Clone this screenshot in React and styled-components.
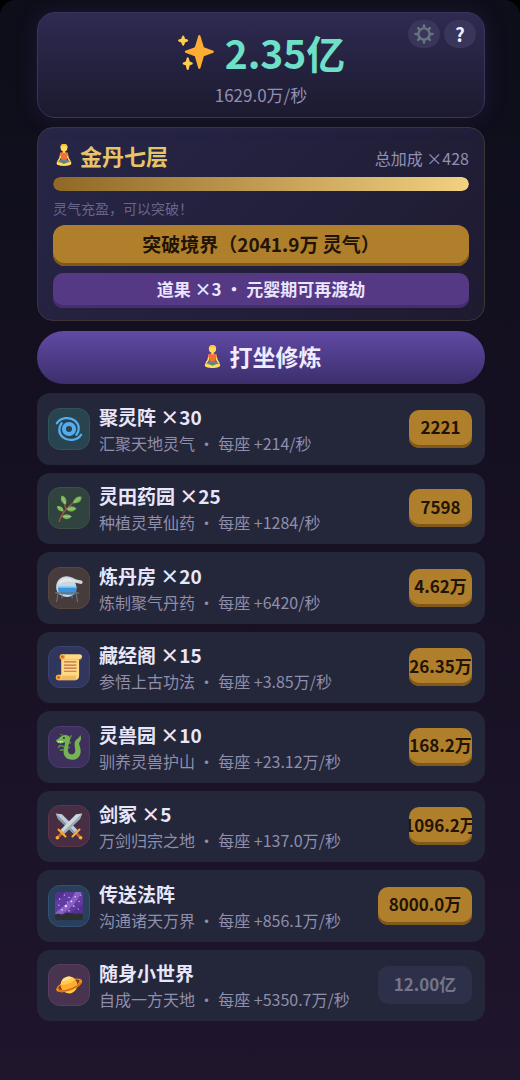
import React from 'react';
import styled, { createGlobalStyle } from 'styled-components';

const GlobalStyle = createGlobalStyle`
   * {
      box-sizing: border-box;
   }
   body {
      margin: 0;
      background: #000;
      font-family: 'Noto Sans CJK SC', sans-serif;
      color: #e8e6ff;
   }
   button {
      font-family: inherit;
      border: none;
      margin: 0;
      padding: 0;
      cursor: pointer;
   }
   h2, h3, p {
      margin: 0;
   }
   svg {
      display: block;
      flex-shrink: 0;
   }
`;

const Page = styled.main`
   display: flex;
   flex-direction: column;
   min-height: 100vh;
   padding: 12px 35px 59px 37px;
   border-radius: 16px 16px 0 0;
   background: linear-gradient(180deg, #0d0e19 0%, #151021 40%, #1f152c 100%);
`;

const Header = styled.header`
   position: relative;
   display: flex;
   flex-direction: column;
   align-items: center;
   height: 106px;
   padding-top: 14px;
   border: 1px solid #3a355c;
   border-radius: 18px;
   background: linear-gradient(180deg, #2e2a51 0%, #1c1a2f 100%);
   box-shadow: 0 0 24px rgba(100, 80, 200, 0.15);
`;

const Total = styled.div`
   display: flex;
   align-items: center;
   gap: 10px;
   height: 50px;
   font-size: 39px;
   line-height: 50px;
   font-weight: 700;
   color: #6ee0c8;
`;

const Rate = styled.p`
   margin-top: 6px;
   font-size: 17px;
   line-height: 24px;
   color: #9290b2;
`;

const Tools = styled.div`
   position: absolute;
   top: 7px;
   right: 8px;
   display: flex;
   gap: 4px;
`;

const ToolButton = styled.button`
   display: flex;
   align-items: center;
   justify-content: center;
   width: 32px;
   height: 28px;
   border-radius: 14px;
   background: #3a355a;
   color: #f0eeff;
   font-size: 19px;
   line-height: 28px;
   font-weight: 700;
`;

const Realm = styled.section`
   display: flex;
   flex-direction: column;
   margin-top: 9px;
   padding: 13px 15px 12px;
   border: 1px solid #3d3438;
   border-radius: 16px;
   background: linear-gradient(135deg, #272647 0%, #1e1a30 100%);
`;

const RealmTop = styled.div`
   display: flex;
   align-items: center;
   justify-content: space-between;
   height: 28px;
`;

const RealmName = styled.h2`
   display: flex;
   align-items: center;
   gap: 5px;
   font-size: 22px;
   line-height: 28px;
   font-weight: 700;
   color: #e8c468;
`;

const Bonus = styled.span`
   padding-top: 5px;
   font-size: 16px;
   line-height: 24px;
   color: #9290b2;
`;

const Track = styled.div`
   height: 14px;
   margin-top: 8px;
   border-radius: 7px;
   background: #15132a;
   overflow: hidden;
`;

const Fill = styled.div`
   height: 100%;
   border-radius: 7px;
   background: linear-gradient(90deg, #8f6825 0%, #f2d180 100%);
`;

const Hint = styled.p`
   margin-top: 7px;
   font-size: 14px;
   line-height: 20px;
   color: #67668a;
`;

const WideButton = styled.button`
   display: flex;
   align-items: center;
   justify-content: center;
   width: 100%;
   height: ${props => props.$kind === 'gold' ? '41px' : '35px'};
   margin-top: 7px;
   padding-bottom: 3px;
   border-radius: ${props => props.$kind === 'gold' ? '12px' : '10px'};
   background: ${props => props.$kind === 'gold' ? '#b07f2c' : '#553985'};
   box-shadow: inset 0 -3px 0 ${props => props.$kind === 'gold' ? '#80591a' : '#452d70'};
   color: ${props => props.$kind === 'gold' ? '#221404' : '#eae4ff'};
   font-size: ${props => props.$kind === 'gold' ? '19px' : '17px'};
   line-height: 28px;
   font-weight: 700;
`;

const Meditate = styled.button`
   display: flex;
   align-items: center;
   justify-content: center;
   gap: 6px;
   height: 53px;
   margin-top: 10px;
   padding-bottom: 3px;
   border-radius: 27px;
   background: linear-gradient(180deg, #614aa5 0%, #3c2e6c 100%);
   color: #f0ecff;
   font-size: 23px;
   line-height: 32px;
   font-weight: 700;
`;

const List = styled.ul`
   display: grid;
   grid-auto-rows: 1fr;
   flex: 1;
   gap: 8px;
   margin: 9px 0 0;
   padding: 0;
   list-style: none;
`;

const Row = styled.li`
   display: flex;
   align-items: center;
   gap: 9px;
   padding: 0 13px 0 11px;
   border-radius: 13px;
   background: #24263a;
`;

const IconBox = styled.div`
   display: flex;
   align-items: center;
   justify-content: center;
   flex-shrink: 0;
   width: 42px;
   height: 42px;
   border: 1px solid ${props => props.$line};
   border-radius: 12px;
   background: ${props => props.$tint};
`;

const Info = styled.div`
   flex: 1;
   min-width: 0;
   white-space: nowrap;
`;

const Name = styled.h3`
   font-size: 19px;
   line-height: 28px;
   font-weight: 700;
   color: #e8e6fa;
`;

const Detail = styled.p`
   font-size: 16px;
   line-height: 24px;
   color: #8f8eab;
`;

const Price = styled.button`
   display: flex;
   align-items: center;
   justify-content: center;
   flex-shrink: 0;
   width: ${props => props.$wide ? '94px' : '63px'};
   height: 38px;
   padding-bottom: 3px;
   border-radius: 10px;
   overflow: hidden;
   white-space: nowrap;
   background: #b07f2c;
   box-shadow: inset 0 -3px 0 #80591a;
   color: #221404;
   font-size: 17px;
   line-height: 24px;
   font-weight: 700;

   &:disabled {
      background: #2d3049;
      box-shadow: none;
      color: #74758a;
   }
`;

const Sparkles = () => (
   <svg width="38" height="38" viewBox="0 0 36 36" aria-hidden="true">
      <path fill="#FFAC33" d="M34.347 16.893l-8.899-3.294-3.323-10.891c-.128-.42-.517-.708-.956-.708-.439 0-.828.288-.956.708l-3.322 10.891-8.9 3.294c-.393.146-.653.519-.653.938 0 .418.26.793.653.938l8.895 3.293 3.324 11.223c.126.424.516.715.959.715.442 0 .833-.291.959-.716l3.324-11.223 8.896-3.293c.391-.144.652-.518.652-.937 0-.418-.261-.792-.653-.938z"/>
      <path fill="#FFCC4D" d="M14.347 27.894l-2.314-.856-.9-3.3c-.118-.436-.513-.738-.964-.738-.451 0-.846.302-.965.737l-.9 3.3-2.313.856c-.393.146-.653.52-.653.938 0 .418.26.793.653.938l2.301.853.907 3.622c.112.444.511.756.97.756.459 0 .858-.312.97-.757l.907-3.622 2.301-.853c.393-.144.653-.519.653-.937 0-.418-.26-.793-.653-.937zM10.009 6.231l-2.364-.875-.876-2.365c-.145-.393-.519-.653-.938-.653-.418 0-.792.26-.938.653l-.875 2.365-2.365.875c-.393.146-.653.52-.653.938 0 .418.26.793.653.938l2.365.875.875 2.365c.146.393.52.653.938.653.418 0 .792-.26.938-.653l.875-2.365 2.365-.875c.393-.146.653-.52.653-.938 0-.418-.26-.792-.653-.938z"/>
   </svg>
);

const Gear = () => (
   <svg width="20" height="20" viewBox="0 0 20 20" fill="none" stroke="#66757F" aria-hidden="true">
      <circle cx="10" cy="10" r="5.600" strokeWidth="2.400"/>
      <path strokeWidth="2.600" strokeLinecap="round" d="M10 3.400V1.600M10 16.600v1.800M3.400 10H1.600M16.600 10h1.800M5.300 5.300L4.200 4.200M14.700 5.300l1.100-1.100M5.300 14.700l-1.100 1.100M14.700 14.700l1.100 1.100"/>
   </svg>
);

const Lotus = ({ size }) => (
   <svg width={size} height={size} viewBox="0 0 36 36" aria-hidden="true">
      <path fill="none" stroke="#FFDC5D" strokeWidth="2.600" strokeLinecap="round" strokeLinejoin="round" d="M13 15.500l-1.600 7.500-3.400 6M23 15.500l1.600 7.500 3.400 6"/>
      <path fill="#F4703A" d="M14 13.500h8c2 .4 2.800 2 3 4.500l-1.800 1.500-.7 7h-9l-.7-7L11 18c.2-2.500 1-4.100 3-4.500z"/>
      <path fill="#FFDC5D" d="M16.200 10.500h3.600v3.600c-.8 1.200-2.800 1.200-3.600 0z"/>
      <path fill="#6D7F96" d="M13.500 25.500h9c2.500 1 4.500 2.600 5.500 4.500l-5 3H13l-5-3c1-1.900 3-3.500 5.500-4.500z"/>
      <path fill="#FFDC5D" d="M6.500 30c1.800-1.300 4.300-.2 6.500.7l5 1.500 5-1.500c2.200-.9 4.700-2 6.500-.7 1.500 1.600.3 3.500-1.500 4.300-3 1.200-6.500 1.700-10 1.700s-7-.5-10-1.700C6.200 33.500 5 31.600 6.500 30z"/>
      <path fill="#5C913B" d="M14 30.500l4 1.700 4-1.700-4-2z"/>
      <ellipse cx="18" cy="6.200" rx="5.600" ry="6" fill="#FFDC5D"/>
      <path fill="#FFC233" d="M12.300 6.500C11.800 1.500 14.500 0 18 0s6.200 1.500 5.700 6.500c-.7-2.200-1.700-3-3.200-3.300-1.800.6-3.500.4-5 .3-1.600.3-2.500 1.200-3.200 3z"/>
   </svg>
);

const Cyclone = () => (
   <g fill="none" stroke="#55ACEE" strokeLinecap="round">
      <circle cx="18" cy="18" r="6.500" strokeWidth="5.200"/>
      <path strokeWidth="3" d="M2.500 10.500C7 3.500 19 1.500 26 7.500c5.500 5 6 12.500 1.500 18"/>
      <path strokeWidth="3" d="M33.500 25.500C29 32.500 17 34.500 10 28.500 4.500 23.500 4 16 8.500 10.500"/>
   </g>
);

const Herb = () => (
   <>
      <path fill="none" stroke="#A0563F" strokeWidth="1.800" strokeLinecap="round" d="M5.500 35.500C7 27 13 20 24 11M14 19.500L12 11M10.500 23.500L7 20M14 19.500l5-.5M8.500 29l5 .5"/>
      <g fill="#77B255">
         <path d="M8.500 2c5 1 7.500 5.500 5.500 11.500C8.500 12 6 7.500 8.500 2z"/>
         <path d="M34 3.500c.5 6-4.500 9.500-11 8C24 6 28.500 2.500 34 3.500z"/>
         <path d="M2.500 15.500c4.500-1 8.500 1.500 8.500 6.500-5 1-8.500-1.500-8.500-6.500z"/>
         <path d="M15 19.500c2-4.500 8.500-5 12.500-1-3.500 5-9.500 5.500-12.500 1z"/>
         <path d="M9.500 29c2-4 8-4 12 0-4 4.500-9.500 4.500-12 0z"/>
      </g>
      <path fill="none" stroke="#A6D388" strokeWidth="1.200" strokeLinecap="round" d="M13 12L10 5M25 10.500l6.500-5M9.500 20.500l-5-3.500M17 19.500l8-.5M11.500 29h8"/>
   </>
);

const Alembic = () => (
   <>
      <path fill="#CCD6DD" d="M1.500 17C1.500 8.500 7.500 3 15.500 3c5 0 8 3 12 4.200l6.500 1.300c2.200.6 2 4.300-.5 4.300L26 11.300c3.500 7.200 1 17.700-9.500 18.200C7.500 29.500 1.500 24 1.500 17z"/>
      <path fill="#E1E8ED" d="M4 14C6 8 11 4.500 16.500 5c4.500.8 8 3.500 16 4.800-7 .7-13-.8-19 .2-4 .6-7 1.800-9.500 4z"/>
      <path fill="#3B94D9" d="M4 16.500h23.500v6c-2 3-5.500 4.500-11 4.500S5.500 25 4 22z"/>
      <path fill="#8CCAF7" d="M4 15.500h23.500v2.200H4z"/>
      <path fill="none" stroke="#66757F" strokeWidth="2" strokeLinecap="round" d="M1 24.500h29"/>
      <path fill="none" stroke="#66757F" strokeWidth="1.400" strokeLinecap="round" d="M4 25L2 35.500M27 25l2 10.500M9 25v6M22 25v6"/>
   </>
);

const Scroll = () => (
   <>
      <path fill="#FFD983" d="M9 1.500h22.500c4.500 0 4.500 6-.5 6.500v21c0 4-2 6-5 6H4.500c-4.500 0-4.500-7 0-7H8V8C5 6 6 2 9 1.500z"/>
      <path fill="#E39F3D" d="M12 8h20c3 0 4-3 3-4 1 6-3 6-7 5H12zM27 35H5c4 0 5-4 3-6h19z" opacity=".5"/>
      <circle cx="9.500" cy="5" r="3.500" fill="#FFAC33"/>
      <circle cx="9.500" cy="5" r="1.800" fill="#C1694F"/>
      <circle cx="4.500" cy="31.500" r="3.500" fill="#FFAC33"/>
      <circle cx="4.500" cy="31.500" r="1.800" fill="#C1694F"/>
      <path stroke="#C1694F" strokeWidth="1.500" strokeLinecap="round" d="M12 11.500h15M12 15.500h15M12 19.500h15M12 23.500h15"/>
   </>
);

const Dragon = () => (
   <>
      <path fill="#77B255" d="M1 9.500c2.500-1 4.500-3.500 7.500-5.500C12 1.500 19 2 19.500 7.500c.3 4-3 8-3 13 0 4.500 1.500 7 4.800 7 3.700 0 5.200-3 4.700-7C25.500 17 24 12.500 27 9c2-2.300 4.300-3 5.500-6.500C34.500 7 33 10 31.500 12c-1.500 2.500 1.500 6 1.500 11 0 7-4.500 11.500-11 11.500-7.500 0-11.500-5-11-12.500.3-4.500 2-7 2-10-3.500 1.800-6.500 2-9.500.5z"/>
      <path fill="#5C913B" d="M9 3.500L5.500 1l6.500 1.500zM18.500 4L22 2.500 20 8zM19 11l2.500 1.500-3.500 2zM17 17l2.500 1.500L17 21z"/>
      <path fill="#E8F5DC" d="M2.500 10.500h8l-1 1.600-1.500-1-1 1.300-1.300-1.300-1.200 1z"/>
      <path fill="none" stroke="#5C913B" strokeWidth="2" strokeLinecap="round" strokeLinejoin="round" d="M11.500 17.500l-5-1.500-2 2.500M11 21.500l-4 .5"/>
      <circle cx="11.500" cy="6.500" r="1.300" fill="#292F33"/>
   </>
);

const Swords = () => (
   <>
      <path fill="#BCCBD6" d="M1 2l8 1 20 20-5 5L4 9z"/>
      <path fill="#8899A6" d="M1 2l25 24-2 2L4 9z"/>
      <path fill="#CCD6DD" d="M35 2l-8 1L7 23l5 5L32 9z"/>
      <path fill="#99AAB5" d="M35 2L10 26l2 2L32 9z"/>
      <path fill="none" stroke="#BE6239" strokeWidth="3.500" d="M9 27l-6 6M27 27l6 6"/>
      <path fill="none" stroke="#FFAC33" strokeWidth="2.600" strokeLinecap="round" d="M4.500 22.500l9 9M31.500 22.500l-9 9"/>
      <circle cx="3" cy="33" r="2.300" fill="#FFAC33"/>
      <circle cx="33" cy="33" r="2.300" fill="#FFAC33"/>
   </>
);

const MilkyWay = () => (
   <>
      <rect x="0" y="0" width="36" height="36" rx="4" fill="#613AA2"/>
      <path fill="#8B5FC4" d="M0 28C7 19 19 16 26 0h8C28 15 17 23 7 30z"/>
      <path fill="#4A2C87" d="M0 4c0-3 1-4 4-4h8c-1 6-5 9-12 11zM36 14v15H20c2-6 9-6 16-15z" opacity=".7"/>
      <g fill="#E6DAFF">
         <circle cx="14" cy="18" r="1.600"/><circle cx="21" cy="12" r="1.200"/><circle cx="9" cy="23" r="1"/>
         <circle cx="26" cy="6" r="1"/><circle cx="18" cy="7" r=".9"/><circle cx="24" cy="18" r="1.100"/>
         <circle cx="6" cy="9" r=".9"/><circle cx="31" cy="12" r=".9"/><circle cx="18" cy="24" r="1"/>
         <circle cx="30" cy="22" r=".8"/><circle cx="5" cy="17" r=".8"/><circle cx="12" cy="4" r=".8"/>
         <circle cx="33" cy="4" r=".8"/><circle cx="16" cy="13" r=".8"/>
      </g>
      <path fill="#292F33" d="M0 29c4-2 6 0 9 0 4 0 5-3 9-2 4 0 6 2 10 1 3-1 5 0 8 0v4c0 3-1 4-4 4H4c-3 0-4-1-4-4z"/>
   </>
);

const Planet = () => (
   <g transform="rotate(-20 18 18)">
      <ellipse cx="18" cy="18.500" rx="17.500" ry="6.800" fill="#F4900C"/>
      <ellipse cx="18" cy="17.500" rx="14.500" ry="4.400" fill="#8A3D1C"/>
      <circle cx="18" cy="18" r="10.800" fill="#FFAC33"/>
      <path fill="#FFCC4D" d="M8 14c1.800-4.500 5.600-6.800 10-6.800S26.200 9.500 28 14c-5 2.600-15 2.600-20 0z"/>
      <path fill="#FFE09A" d="M11 10.500c2-2 4-3 7-3.100 3 .1 5 1.100 7 3.100-4 1.200-10 1.200-14 0z"/>
      <path fill="#F4900C" d="M1 16.800C2.500 21 9.500 22.800 18 22.800s15.500-1.800 17-6c1.500 5.200-6.500 8.500-17 8.500S-.5 22 1 16.800z"/>
      <path fill="none" stroke="#B5561A" strokeWidth="1" d="M3 20.500c3.500 2.300 9 3.200 15 3.200s11.500-.9 15-3.200"/>
      <path fill="#FFCC4D" d="M10.500 25.200c4.500.8 10.500.8 15 0C21.500 29.500 14.500 29.500 10.500 25.200z"/>
   </g>
);

const buildings = [
   { name: '聚灵阵', count: 30, text: '汇聚天地灵气', each: '214', price: '2221', icon: Cyclone, tint: '#294451', line: '#305457' },
   { name: '灵田药园', count: 25, text: '种植灵草仙药', each: '1284', price: '7598', icon: Herb, tint: '#30433f', line: '#3b5046' },
   { name: '炼丹房', count: 20, text: '炼制聚气丹药', each: '6420', price: '4.62万', icon: Alembic, tint: '#473b3b', line: '#57483f' },
   { name: '藏经阁', count: 15, text: '参悟上古功法', each: '3.85万', price: '26.35万', icon: Scroll, tint: '#30365c', line: '#3b4272' },
   { name: '灵兽园', count: 10, text: '驯养灵兽护山', each: '23.12万', price: '168.2万', icon: Dragon, tint: '#3e305c', line: '#4d3b72' },
   { name: '剑冢', count: 5, text: '万剑归宗之地', each: '137.0万', price: '1096.2万', icon: Swords, tint: '#482e42', line: '#5b374b' },
   { name: '传送法阵', count: 0, text: '沟通诸天万界', each: '856.1万', price: '8000.0万', icon: MilkyWay, tint: '#293f5c', line: '#315272' },
   { name: '随身小世界', count: 0, text: '自成一方天地', each: '5350.7万', price: '12.00亿', icon: Planet, tint: '#483350', line: '#5c3d60', locked: true },
];

const Building = ({ item }) => {
   const Icon = item.icon;

   return (
      <Row>
         <IconBox $tint={item.tint} $line={item.line}>
            <svg width="28" height="28" viewBox="0 0 36 36" aria-hidden="true">
               <Icon/>
            </svg>
         </IconBox>
         <Info>
            <Name>{item.name}{item.count > 0 && ` ×${item.count}`}</Name>
            <Detail>{item.text} · 每座 +{item.each}/秒</Detail>
         </Info>
         <Price $wide={item.count === 0} disabled={item.locked}>{item.price}</Price>
      </Row>
   )
}

const App = () => {
   const progress = 100;

   return (
      <>
         <GlobalStyle/>
         <Page lang="zh-CN">
            <Header>
               <Total><Sparkles/>2.35亿</Total>
               <Rate>1629.0万/秒</Rate>
               <Tools>
                  <ToolButton aria-label="设置"><Gear/></ToolButton>
                  <ToolButton>?</ToolButton>
               </Tools>
            </Header>

            <Realm>
               <RealmTop>
                  <RealmName><Lotus size={22}/>金丹七层</RealmName>
                  <Bonus>总加成 ×428</Bonus>
               </RealmTop>
               <Track>
                  <Fill style={{width: `${progress}%`}}/>
               </Track>
               <Hint>灵气充盈，可以突破！</Hint>
               <WideButton $kind="gold">突破境界（2041.9万 灵气）</WideButton>
               <WideButton $kind="purple">道果 ×3 · 元婴期可再渡劫</WideButton>
            </Realm>

            <Meditate><Lotus size={23}/>打坐修炼</Meditate>

            <List>
               {buildings.map(item => <Building key={item.name} item={item}/>)}
            </List>
         </Page>
      </>
   )
}

export default App;
